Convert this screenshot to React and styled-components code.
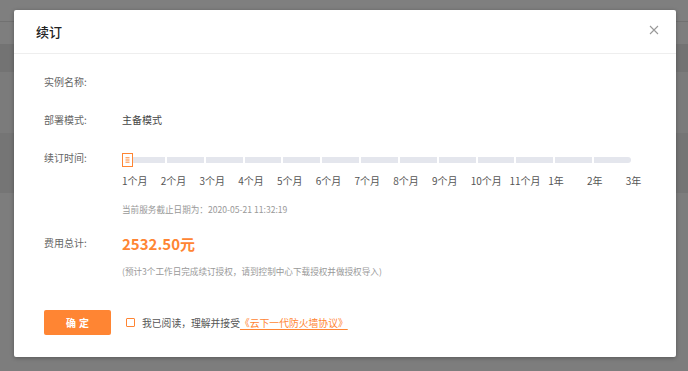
import React from "react";
import styled, { createGlobalStyle } from "styled-components";

const GlobalStyle = createGlobalStyle`
  html, body {
    margin: 0;
    padding: 0;
    width: 688px;
    height: 371px;
    overflow: hidden;
    font-family: "Noto Sans CJK SC", "Noto Sans", sans-serif;
  }
`;

const Page = styled.div`
  position: relative;
  width: 688px;
  height: 371px;
  background: #fafafa;
  overflow: hidden;
`;

const Band = styled.div`
  height: ${(p) => p.h}px;
  background: ${(p) => p.bg};
  border-bottom: ${(p) => (p.line ? "1px solid #e2e2e2" : "none")};
`;

const Mask = styled.div`
  position: absolute;
  inset: 0;
  background: rgba(0, 0, 0, 0.5);
`;

const Modal = styled.div`
  position: absolute;
  left: 14px;
  top: 10px;
  width: 662px;
  height: 347px;
  background: #fff;
  border-radius: 2px;
  box-shadow: 0 1px 4px rgba(0, 0, 0, 0.3);
  display: flex;
  flex-direction: column;
`;

const Header = styled.div`
  height: 43px;
  flex-shrink: 0;
  display: flex;
  align-items: center;
  justify-content: space-between;
  padding: 0 16px 0 22px;
  border-bottom: 1px solid #eeeeee;
`;

const Title = styled.div`
  font-size: 13px;
  font-weight: 500;
  color: #222;
  line-height: 16px;
`;

const Close = styled.button`
  width: 12px;
  height: 12px;
  padding: 0;
  border: none;
  background: none;
  display: flex;
  align-items: center;
  justify-content: center;
  margin-top: -4px;
  cursor: pointer;
`;

const Body = styled.div`
  flex: 1;
  padding: 21px 30px 22px 30px;
  display: flex;
  flex-direction: column;
`;

const Row = styled.div`
  display: flex;
  align-items: flex-start;
  margin-bottom: ${(p) => p.mb || 0}px;
`;

const Label = styled.div`
  width: 78px;
  flex-shrink: 0;
  font-size: 10px;
  line-height: 14px;
  color: #666;
`;

const Value = styled.div`
  font-size: 10px;
  line-height: 14px;
  color: #444;
`;

const SliderBlock = styled.div`
  display: flex;
  flex-direction: column;
  padding-top: 2px;
`;

const TrackWrap = styled.div`
  position: relative;
  height: 14px;
  display: flex;
  align-items: center;
  padding-left: 6px;
  width: 503px;
`;

const Track = styled.div`
  display: flex;
  gap: 2px;
  width: 503px;
  height: 6px;
`;

const Segment = styled.div`
  flex: 1;
  background: #e4e6ed;
  border-radius: ${(p) => (p.last ? "0 3px 3px 0" : "0")};
`;

const Handle = styled.div`
  position: absolute;
  left: 0;
  top: 0;
  width: 9px;
  height: 12px;
  border: 1px solid #ff8533;
  background: #fff;
  display: flex;
  align-items: center;
  justify-content: center;
`;

const Marks = styled.div`
  display: grid;
  grid-template-columns: repeat(14, 38.75px);
  margin-top: 7px;
`;

const Mark = styled.span`
  font-size: 10px;
  line-height: 14px;
  color: #555;
  white-space: nowrap;
`;

const Hint = styled.div`
  font-size: 8.6px;
  line-height: 12px;
  color: #999;
  margin-top: ${(p) => p.mt || 0}px;
  white-space: nowrap;
`;

const Price = styled.div`
  font-size: 15px;
  font-weight: 700;
  line-height: 20px;
  color: #ff8533;
  margin-top: -2px;
`;

const Footer = styled.div`
  display: flex;
  align-items: center;
  margin-top: auto;
`;

const Confirm = styled.button`
  width: 67px;
  height: 25px;
  border: none;
  border-radius: 2px;
  background: #ff8533;
  color: #fff;
  font-family: inherit;
  font-size: 10px;
  font-weight: 700;
  letter-spacing: 3px;
  padding: 0 0 0 3px;
  cursor: pointer;
`;

const Agree = styled.label`
  display: flex;
  align-items: center;
  margin-left: 15px;
  font-size: 9.8px;
  line-height: 14px;
  color: #555;
`;

const Box = styled.span`
  width: 7px;
  height: 7px;
  border: 1px solid #ff8533;
  border-radius: 1px;
  margin-right: 7px;
  display: inline-block;
`;

const Link = styled.a`
  color: #ff8533;
  text-decoration: underline;
  text-underline-offset: 2px;
`;

const marks = [
  "1个月", "2个月", "3个月", "4个月", "5个月", "6个月", "7个月",
  "8个月", "9个月", "10个月", "11个月", "1年", "2年", "3年",
];

const App = () => {
  return (
    <Page>
      <GlobalStyle />
      <Band h={21} bg="#ffffff" line />
      <Band h={22} bg="#fcfcfc" />
      <Band h={28} bg="#e6e6e6" />
      <Band h={61} bg="#f6f6f6" />
      <Band h={60} bg="#ebebeb" />
      <Mask />
      <Modal>
        <Header>
          <Title>续订</Title>
          <Close aria-label="close">
            <svg width="10" height="10" viewBox="0 0 10 10">
              <path d="M1 1L9 9M9 1L1 9" stroke="#999" strokeWidth="1.1" />
            </svg>
          </Close>
        </Header>
        <Body>
          <Row mb={24}>
            <Label>实例名称:</Label>
          </Row>
          <Row mb={24}>
            <Label>部署模式:</Label>
            <Value>主备模式</Value>
          </Row>
          <Row mb={21}>
            <Label>续订时间:</Label>
            <SliderBlock>
              <TrackWrap>
                <Track>
                  {Array.from({ length: 13 }).map((_, i) => (
                    <Segment key={i} last={i === 12} />
                  ))}
                </Track>
                <Handle>
                  <svg width="5" height="6" viewBox="0 0 5 6">
                    <path d="M0.5 0.8H4.5M0.5 3H4.5M0.5 5.2H4.5" stroke="#ff8533" strokeWidth="1" />
                  </svg>
                </Handle>
              </TrackWrap>
              <Marks>
                {marks.map((m) => (
                  <Mark key={m}>{m}</Mark>
                ))}
              </Marks>
              <Hint mt={15}>当前服务截止日期为：2020-05-21 11:32:19</Hint>
            </SliderBlock>
          </Row>
          <Row>
            <Label>费用总计:</Label>
            <div>
              <Price>2532.50元</Price>
              <Hint mt={11}>(预计3个工作日完成续订授权，请到控制中心下载授权并做授权导入)</Hint>
            </div>
          </Row>
          <Footer>
            <Confirm>确定</Confirm>
            <Agree>
              <Box />
              我已阅读，理解并接受<Link href="#">《云下一代防火墙协议》</Link>
            </Agree>
          </Footer>
        </Body>
      </Modal>
    </Page>
  );
};

export default App;
